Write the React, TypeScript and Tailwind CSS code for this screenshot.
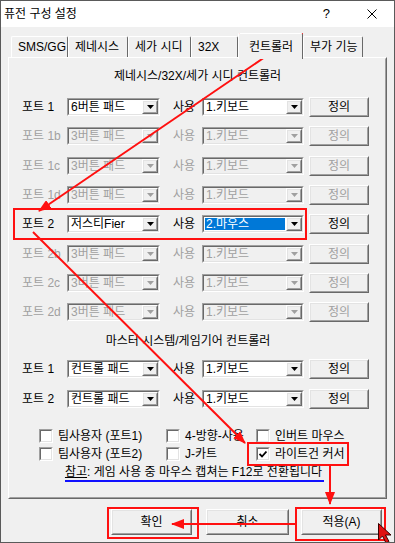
import React from "react";

const font = "font-['Liberation_Sans','Noto_Sans_CJK_KR',sans-serif]";

type Row = { label: string; pad: string; use: string; on?: boolean; sel?: boolean };

const genesis: Row[] = [
  { label: "포트 1", pad: "6버튼 패드", use: "1.키보드", on: true },
  { label: "포트 1b", pad: "3버튼 패드", use: "1.키보드" },
  { label: "포트 1c", pad: "3버튼 패드", use: "1.키보드" },
  { label: "포트 1d", pad: "3버튼 패드", use: "1.키보드" },
  { label: "포트 2", pad: "저스티Fier", use: "2.마우스", on: true, sel: true },
  { label: "포트 2b", pad: "3버튼 패드", use: "1.키보드" },
  { label: "포트 2c", pad: "3버튼 패드", use: "1.키보드" },
  { label: "포트 2d", pad: "3버튼 패드", use: "1.키보드" },
];

const master: Row[] = [
  { label: "포트 1", pad: "컨트롤 패드", use: "1.키보드", on: true },
  { label: "포트 2", pad: "컨트롤 패드", use: "1.키보드", on: true },
];

const tabs = [
  { name: "SMS/GG", w: "w-[57px]" },
  { name: "제네시스", w: "w-[60px]" },
  { name: "세가 시디", w: "w-[63px]" },
  { name: "32X", w: "w-[47px]" },
  { name: "컨트롤러", w: "w-[65px]", active: true },
  { name: "부가 기능", w: "w-[60px]" },
];

// classic 3d edges
function Raised({ className = "", children }: { className?: string; children?: React.ReactNode }) {
  return (
    <div className={`border border-t-white border-l-white border-r-[#696969] border-b-[#696969] bg-[#f0f0f0] ${className}`}>
      <div className="flex h-full w-full items-center justify-center border border-t-[#e3e3e3] border-l-[#e3e3e3] border-r-[#a0a0a0] border-b-[#a0a0a0]">
        {children}
      </div>
    </div>
  );
}

function Sunken({ className = "", inner = "", children }: { className?: string; inner?: string; children?: React.ReactNode }) {
  return (
    <div className={`border border-t-[#a0a0a0] border-l-[#a0a0a0] border-r-white border-b-white ${className}`}>
      <div className={`h-full w-full border border-t-[#696969] border-l-[#696969] border-r-[#e3e3e3] border-b-[#e3e3e3] ${inner}`}>
        {children}
      </div>
    </div>
  );
}

function Combo({ w, value, on, sel }: { w: string; value: string; on?: boolean; sel?: boolean }) {
  return (
    <Sunken className={`${w} h-[18px]`} inner={`flex items-stretch ${on ? "bg-white" : "bg-[#f0f0f0]"}`}>
      <div className="flex min-w-0 flex-1 items-center p-px">
        <span
          className={`flex h-full w-full items-center pl-[1px] leading-none ${
            sel ? "bg-[#0078d7] text-white" : on ? "text-black" : "text-[#a0a0a0]"
          }`}
        >
          {value}
        </span>
      </div>
      <Raised className="w-[16px]">
        <svg width="7" height="4" viewBox="0 0 7 4">
          <polygon points="0,0 7,0 3.5,4" fill={on ? "#000" : "#a0a0a0"} />
        </svg>
      </Raised>
    </Sunken>
  );
}

function PortRow({ r }: { r: Row }) {
  const txt = r.on ? "text-black" : "text-[#a0a0a0]";
  return (
    <div className="flex h-[29.3px] items-center pl-[12px]">
      <span className={`w-[45px] ${txt}`}>{r.label}</span>
      <Combo w="w-[93px]" value={r.pad} on={r.on} />
      <span className={`ml-[13px] w-[29px] ${txt}`}>사용</span>
      <Combo w="w-[102px]" value={r.use} on={r.on} sel={r.sel} />
      <Raised className="ml-[5px] h-[20px] w-[60px]">
        <span className={txt}>정의</span>
      </Raised>
    </div>
  );
}

function Check({ label, checked }: { label: string; checked?: boolean }) {
  return (
    <div className="flex items-center">
      <Sunken className="h-[14px] w-[14px]" inner="flex items-center justify-center bg-white">
        {checked && (
          <svg width="8" height="7" viewBox="0 0 8 7">
            <polyline points="0.5,3 3,5.5 7.5,0.5" fill="none" stroke="#000" strokeWidth="1.8" />
          </svg>
        )}
      </Sunken>
      <span className="ml-[5px] whitespace-nowrap">{label}</span>
    </div>
  );
}

function Overlay() {
  const red = "#ff1010";
  return (
    <svg className="pointer-events-none absolute left-[-1px] top-[-1px]" width="395" height="543" viewBox="0 0 395 543">
      <defs>
        <marker id="ah" markerUnits="userSpaceOnUse" markerWidth="13" markerHeight="10" refX="12" refY="5" orient="auto">
          <path d="M0,0 L13,5 L0,10 z" fill={red} />
        </marker>
      </defs>
      <g fill="none" stroke={red} strokeWidth="2">
        <rect x="240" y="34" width="62" height="22" />
        <rect x="14" y="209" width="292" height="30" />
        <rect x="248" y="443" width="100" height="22" />
        <rect x="296" y="508" width="89" height="32" />
        <rect x="108" y="508" width="90" height="30" />
        <line x1="265" y1="57" x2="39" y2="211" markerEnd="url(#ah)" />
        <line x1="33" y1="232" x2="245" y2="443" markerEnd="url(#ah)" />
        <line x1="330" y1="466" x2="330" y2="504" markerEnd="url(#ah)" />
        <line x1="296" y1="524" x2="172" y2="524" markerEnd="url(#ah)" />
      </g>
      <line x1="65" y1="481" x2="324" y2="481" stroke="#1010ff" strokeWidth="2" />
      <path d="M378.5,523.5 L378.5,540 L382.5,536 L386,543 L389,541.5 L385.5,535 L391,535 Z" fill="#e01010" stroke="#3a0000" strokeWidth="1" />
    </svg>
  );
}

export default function App() {
  return (
    <div className={`relative h-[543px] w-[395px] overflow-hidden border border-[#5a5a5a] bg-[#f0f0f0] text-[12px] text-black ${font}`}>
      {/* title bar */}
      <div className="flex h-[26px] items-center bg-white pl-[3px]">
        <span>퓨전 구성 설정</span>
        <span className="ml-auto mr-[37px] text-[13px]">?</span>
        <svg className="mr-[17px]" width="10" height="10" viewBox="0 0 10 10">
          <path d="M0.5,0.5 L9.5,9.5 M9.5,0.5 L0.5,9.5" stroke="#000" strokeWidth="1" />
        </svg>
      </div>

      {/* tabs */}
      <div className="flex h-[30px] items-end pl-[10px]">
        {tabs.map((t) => (
          <div
            key={t.name}
            className={`${t.w} flex items-center rounded-t-[2px] border border-b-0 border-t-white border-l-white border-r-[#696969] bg-[#f0f0f0] pl-[6px] ${
              t.active ? "relative z-10 mb-[-2px] h-[26px] items-start pt-[4px] pl-[10px]" : "h-[21px]"
            }`}
          >
            {t.name}
          </div>
        ))}
      </div>

      {/* tab page */}
      <div className="ml-[7px] h-[442px] w-[379px] border border-t-white border-l-white border-r-[#696969] border-b-[#696969]">
        <div className="flex h-full w-full flex-col border border-t-[#f0f0f0] border-l-[#f0f0f0] border-r-[#a0a0a0] border-b-[#a0a0a0]">
          <div className="flex h-[33.5px] items-center justify-center">제네시스/32X/세가 시디 컨트롤러</div>
          {genesis.map((r) => (
            <PortRow key={r.label} r={r} />
          ))}
          <div className="flex h-[27.7px] items-center justify-center pr-[19px]">마스터 시스템/게임기어 컨트롤러</div>
          {master.map((r) => (
            <PortRow key={r.label + "m"} r={r} />
          ))}

          <div className="mt-[14px] grid grid-cols-[127px_90px_1fr] grid-rows-[18px_18px] items-center pl-[29px]">
            <Check label="팀사용자 (포트1)" />
            <Check label="4-방향-사용" />
            <Check label="인버트 마우스" />
            <Check label="팀사용자 (포트2)" />
            <Check label="J-카트" />
            <Check label="라이트건 커서" checked />
          </div>

          <div className="flex h-[18px] items-center justify-center pr-[8px]">
            <span>
              <span className="underline">참고</span>: 게임 사용 중 마우스 캡쳐는 F12로 전환됩니다
            </span>
          </div>
        </div>
      </div>

      {/* dialog buttons */}
      <div className="mt-[10px] flex">
        <Raised className="ml-[110px] h-[26px] w-[81px]">확인</Raised>
        <Raised className="ml-[14px] h-[26px] w-[83px]">취소</Raised>
        <Raised className="ml-[12px] h-[26px] w-[81px]">적용(A)</Raised>
      </div>

      <Overlay />
    </div>
  );
}
